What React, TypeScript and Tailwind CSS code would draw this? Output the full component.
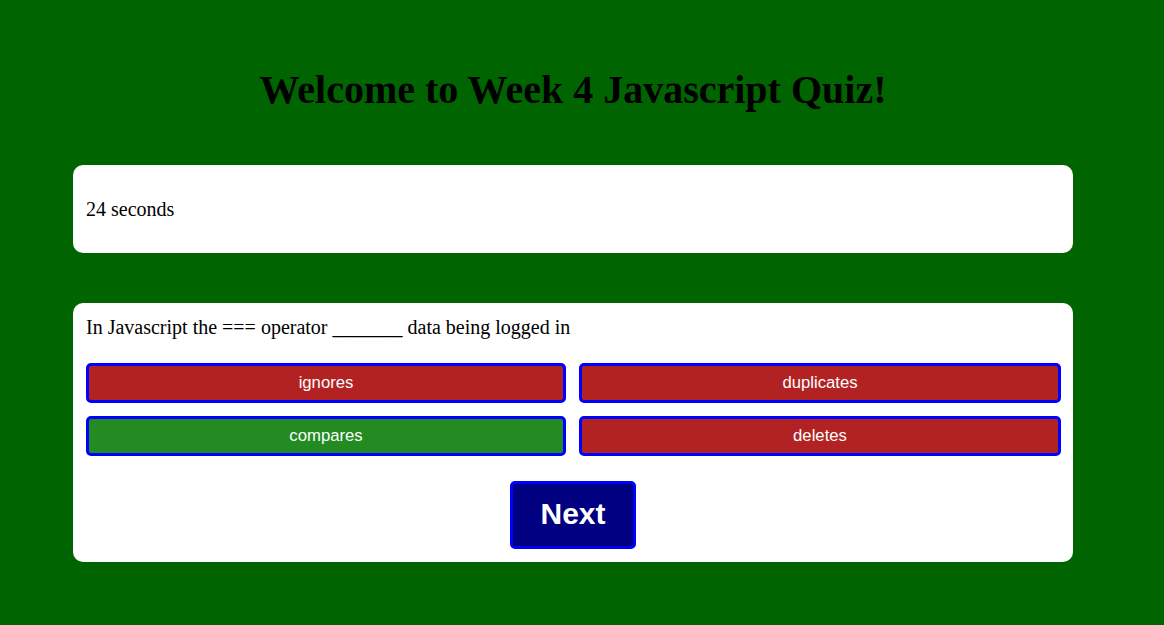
const ANSWERS = [
  { text: "ignores", correct: false },
  { text: "duplicates", correct: false },
  { text: "compares", correct: true },
  { text: "deletes", correct: false },
];

export default function App() {
  return (
    <div className="min-h-screen bg-[#006400] pt-[67px] pb-[63px] font-['Liberation_Serif',serif] text-black">
      <div className="ml-[73px] w-[1000px]">
        <h1 className="text-center text-[40px] leading-[46px] font-bold">
          Welcome to Week 4 Javascript Quiz!
        </h1>

        {/* timer */}
        <div className="mt-[52px] flex h-[88px] items-center rounded-[10px] bg-white pl-[13px] pr-[12px] text-[20px]">
          24 seconds
        </div>

        {/* question */}
        <div className="mt-[50px] flex h-[259px] flex-col rounded-[10px] bg-white pl-[13px] pr-[12px] pt-[12px]">
          <p className="text-[20px] leading-[24px]">
            In Javascript the === operator _______ data being logged in
          </p>
          <div className="mt-[24px] grid grid-cols-[480px_482px] gap-[13px]">
            {ANSWERS.map(a => (
              <button
                key={a.text}
                className={`h-[40px] rounded-[5px] border-[3px] border-[#0000ff] font-['Liberation_Sans',sans-serif] text-[16.7px] text-white ${
                  a.correct ? "bg-[#228b22]" : "bg-[#b22222]"
                }`}
              >
                {a.text}
              </button>
            ))}
          </div>
          <div className="mt-[25px] flex justify-center">
            <button className="mr-[1px] h-[68px] w-[126px] rounded-[5px] border-[3px] border-[#0000ff] bg-[#000080] pb-[3px] font-['Liberation_Sans',sans-serif] text-[30px] font-bold text-white">
              Next
            </button>
          </div>
        </div>
      </div>
    </div>
  );
}
